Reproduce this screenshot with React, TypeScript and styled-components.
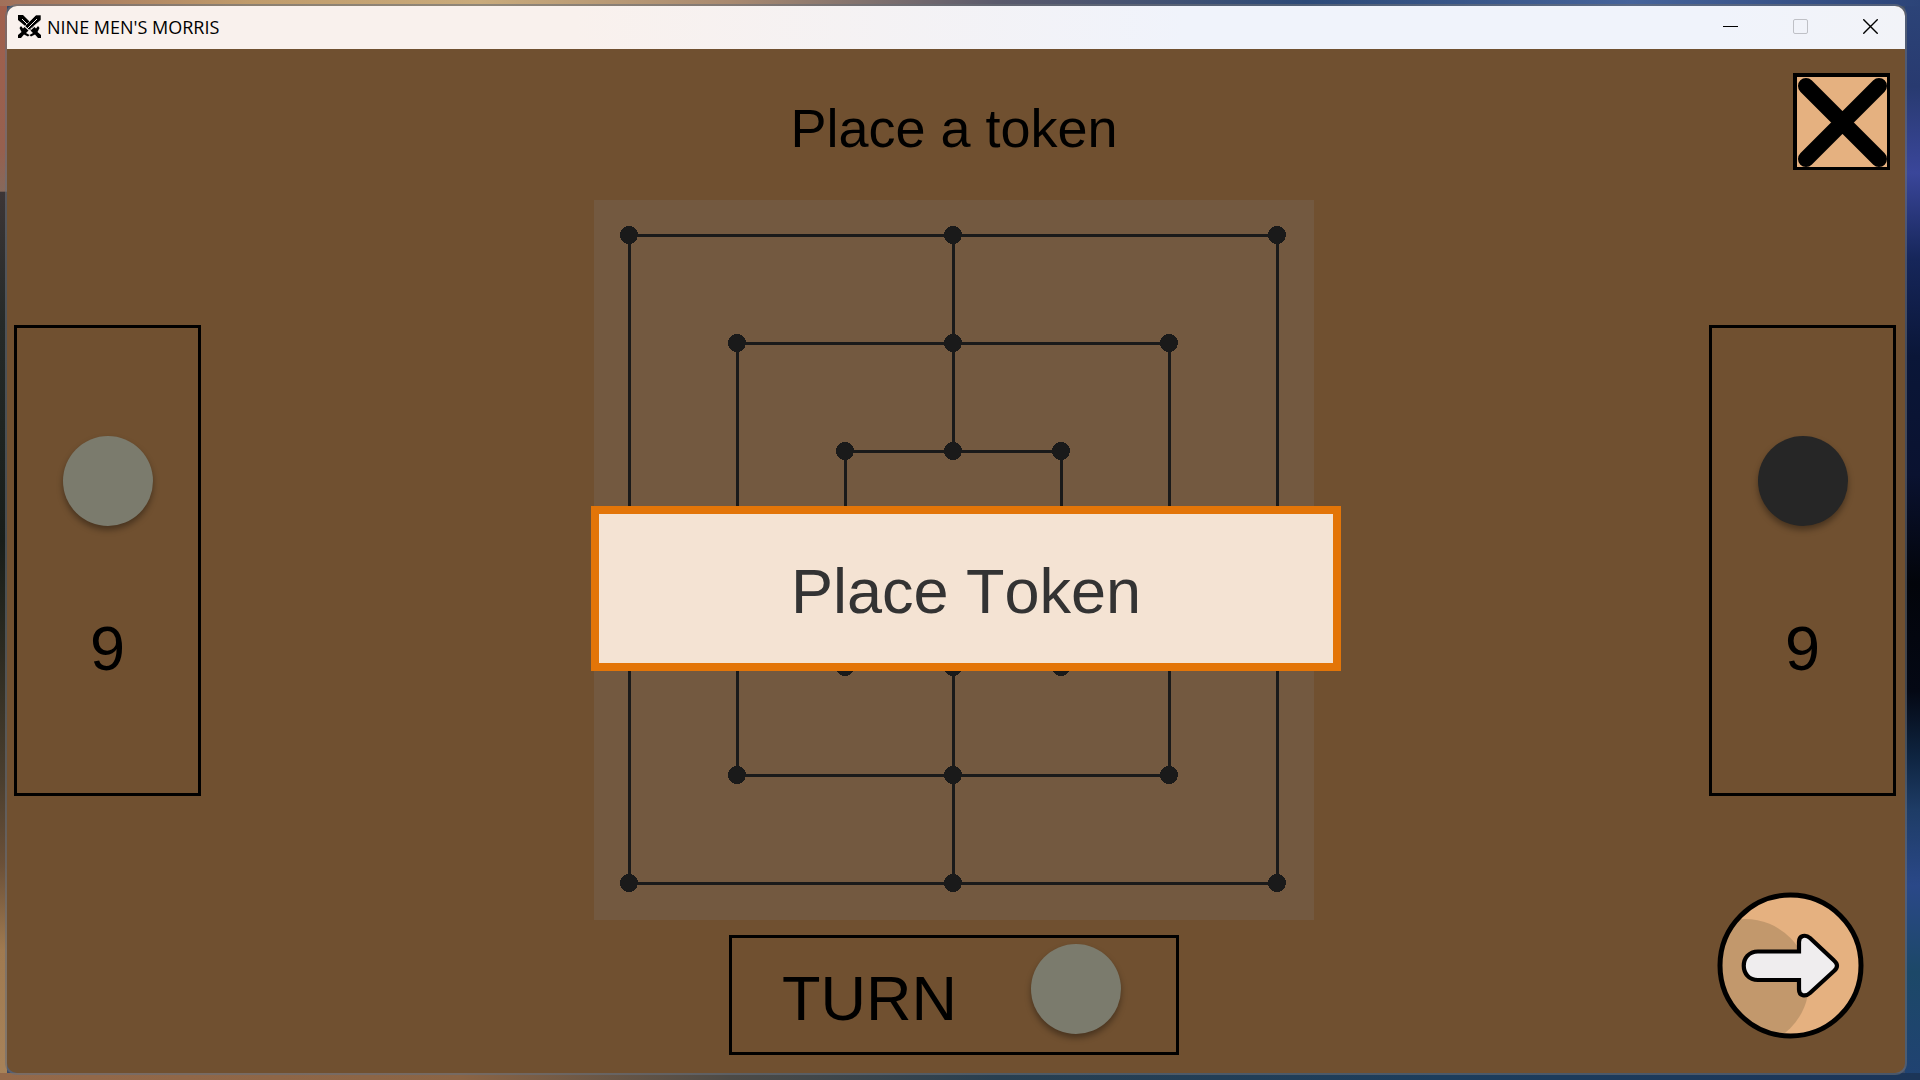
import React from "react";
import styled, { createGlobalStyle } from "styled-components";

const GlobalStyle = createGlobalStyle`
  * { box-sizing: border-box; }
  body {
    margin: 0;
    font-family: "Liberation Sans", Arial, sans-serif;
    color: #000;
  }
`;

const Desktop = styled.div`
  display: flex;
  min-height: 100vh;
  padding: 6px 15px 7px 7px;
  background:
    linear-gradient(90deg, #a1705a 0%, #c09c6c 13%, #c9ab7c 25%, #a98a70 38%, #5a5a6c 52%, #2d4a78 68%, #46639a 85%, #2c4478 100%) top / 100% 6px no-repeat,
    linear-gradient(90deg, #94694a 0%, #8a6445 24%, #4c4a46 38%, #283f50 52%, #1c3d5c 75%, #1c3558 100%) bottom / 100% 7px no-repeat,
    linear-gradient(180deg, #a1604d 0%, #96604f 14%, #86695c 17.7%, #3c3536 17.8%, #252a28 30%, #181d19 50%, #2c2a20 60%, #4a3e2e 72%, #6b5038 80%, #a07a50 88%, #a8835a 100%) left / 7px 100% no-repeat,
    linear-gradient(180deg, #2c4478 0%, #283a70 8%, #3a469a 16%, #16265a 24%, #0a1638 33%, #0a1230 44%, #02040a 54%, #040814 64%, #0e2440 70%, #1e3c66 75%, #2a4888 82%, #1c4868 90%, #204272 100%) right / 15px 100% no-repeat,
    #3a4a66;
`;

const AppWindow = styled.div`
  flex: 1;
  display: flex;
  flex-direction: column;
  border-radius: 10px;
  overflow: hidden;
  background: #705030;
  box-shadow: 0 0 0 2px rgba(105, 110, 118, 0.6);
`;

const TitleBar = styled.header`
  display: flex;
  align-items: center;
  height: 43px;
  padding: 0 0 2px 11px;
  gap: 5px;
  background: linear-gradient(90deg, #f9f1ed 0%, #f9f1ed 30%, #f0f3fb 62%, #f0f3fb 90%, #f2f3f8 100%);
`;

const WindowTitle = styled.span`
  flex: 1;
  font: 18px/24px "Open Sans", "Noto Sans", sans-serif;
`;

const WindowButton = styled.button`
  display: grid;
  place-items: center;
  width: 70px;
  height: 41px;
  padding: 0;
  border: 0;
  background: none;
  color: #000;
  &:disabled { color: #bfc0c6; }
`;

const Controls = styled.div`
  display: flex;
`;

const Stage = styled.main`
  flex: 1;
  display: grid;
  grid-template-columns: 187px 1fr 187px;
  padding: 0 9px 0 7px;
`;

const Side = styled.aside`
  display: grid;
  grid-template-rows: 1fr auto 1fr;
  padding-bottom: 2px;
`;

const PlayerPanel = styled.section`
  grid-row: 2;
  display: flex;
  flex-direction: column;
  align-items: center;
  gap: 90px;
  padding: 108px 0 113px;
  border: 3px solid #000;
`;

const Token = styled.span<{ $dark?: boolean }>`
  width: 90px;
  height: 90px;
  border-radius: 50%;
  background: ${(p) => (p.$dark ? "#262626" : "#7b7b6d")};
  box-shadow: 0 4px 6px rgba(0, 0, 0, 0.36);
`;

const BigText = styled.span`
  font-size: 63px;
  line-height: 64px;
  font-kerning: none;
`;

const CloseButton = styled.button`
  grid-row: 1;
  justify-self: end;
  align-self: start;
  width: 97px;
  height: 97px;
  margin: 24px 6px 0 0;
  padding: 0;
  border: 0;
  background: #e5b180;
`;

const NextButton = styled.button`
  grid-row: 3;
  justify-self: end;
  align-self: end;
  width: 147px;
  height: 147px;
  margin: 0 32px 32px 0;
  padding: 0;
  border: 0;
  border-radius: 50%;
  background: none;
`;

const Drawing = styled.svg`
  display: block;
`;

const Play = styled.div`
  display: flex;
  flex-direction: column;
  align-items: center;
  padding-right: 2px;
`;

const Instruction = styled.h1`
  margin: 47px 0 40px;
  font-size: 54px;
  font-weight: 400;
  line-height: 64px;
`;

const BoardArea = styled.div`
  position: relative;
  width: 720px;
  background: #735940;
`;

const Notice = styled.div`
  position: absolute;
  top: 306px;
  left: -3px;
  display: flex;
  align-items: center;
  justify-content: center;
  width: 750px;
  height: 165px;
  padding-top: 5px;
  border: 8px solid #e37508;
  background: #f4e3d3;
  color: #333;
`;

const TurnBox = styled.section`
  display: flex;
  justify-content: space-between;
  align-items: flex-start;
  width: 450px;
  height: 120px;
  margin: 15px 0 18px;
  padding: 6px 55px 0 50px;
  border: 3px solid #000;
`;

const TurnLabel = styled(BigText)`
  align-self: center;
`;

const CENTER = 3;
const at = (n: number) => 35 + n * 108;

function Board() {
  const points = [0, 1, 2].flatMap((ring) => {
    const stops = [ring, CENTER, 6 - ring];
    return stops.flatMap((x) => stops.map((y) => [x, y])).filter(([x, y]) => x !== CENTER || y !== CENTER);
  });
  return (
    <Drawing width="720" height="720" viewBox="0 0 720 720" shapeRendering="crispEdges" role="img" aria-label="Board">
      <g transform="translate(.5 .5)" fill="none" stroke="#1a1a1a" strokeWidth="3">
        {[0, 1, 2].map((ring) => (
          <rect key={ring} x={at(ring)} y={at(ring)} width={(6 - 2 * ring) * 108} height={(6 - 2 * ring) * 108} />
        ))}
        <path d={`M${at(3)} ${at(0)}V${at(2)}M${at(3)} ${at(4)}V${at(6)}M${at(0)} ${at(3)}H${at(2)}M${at(4)} ${at(3)}H${at(6)}`} />
      </g>
      {points.map(([x, y]) => (
        <circle key={`${x}-${y}`} cx={at(x)} cy={at(y)} r="9" fill="#1a1a1a" />
      ))}
    </Drawing>
  );
}

const BLADE = "M0 0H5L16 11L12 15L0 5Z";
const HILT = "M20 11L21.500 13L19.500 17L23 20V23H20L17 19.500L13 21.500L11.500 20L15 18L12.500 15.500L16.500 12L18 13.500Z";

function SwordsIcon() {
  return (
    <Drawing width="24" height="24" viewBox="0 0 24 24" aria-hidden="true">
      <path d={BLADE} />
      <path d="M4 4L14 14" stroke="#f9f1ed" />
      <path d={HILT} />
      <g transform="matrix(-1 0 0 1 23 0)">
        <path d={BLADE} stroke="#f9f1ed" strokeWidth=".6" />
        <path d="M4 4L14 14" stroke="#f9f1ed" />
        <path d={HILT} />
      </g>
    </Drawing>
  );
}

function Player({ dark, left, name }: { dark?: boolean; left: number; name: string }) {
  return (
    <PlayerPanel aria-label={name}>
      <Token $dark={dark} />
      <BigText>{left}</BigText>
    </PlayerPanel>
  );
}

export default function App() {
  return (
    <>
      <GlobalStyle />
      <Desktop>
        <AppWindow>
          <TitleBar>
            <SwordsIcon />
            <WindowTitle>NINE MEN'S MORRIS</WindowTitle>
            <Controls>
              <WindowButton aria-label="Minimize">
                <Drawing width="15" height="15" viewBox="0 0 15 15"><path d="M0 7.500H15" stroke="currentColor" /></Drawing>
              </WindowButton>
              <WindowButton aria-label="Maximize" disabled>
                <Drawing width="15" height="15" viewBox="0 0 15 15"><rect x=".5" y=".5" width="14" height="14" rx="1.500" fill="none" stroke="currentColor" /></Drawing>
              </WindowButton>
              <WindowButton aria-label="Close window">
                <Drawing width="15" height="15" viewBox="0 0 15 15"><path d="M.3 .3L14.700 14.700M14.700 .3L.3 14.700" stroke="currentColor" strokeWidth="1.400" /></Drawing>
              </WindowButton>
            </Controls>
          </TitleBar>
          <Stage>
            <Side>
              <Player name="Light player" left={9} />
            </Side>
            <Play>
              <Instruction>Place a token</Instruction>
              <BoardArea>
                <Board />
                <Notice role="alert">
                  <BigText>Place Token</BigText>
                </Notice>
              </BoardArea>
              <TurnBox>
                <TurnLabel>TURN</TurnLabel>
                <Token />
              </TurnBox>
            </Play>
            <Side>
              <CloseButton aria-label="Quit game">
                <Drawing width="97" height="97" viewBox="0 0 97 97">
                  <path d="M0 0H97V97H0ZM4 4V94H94V4Z" fillRule="evenodd" />
                  <path d="M13 13L86 86M86 13L13 86" stroke="#000" strokeWidth="16" strokeLinecap="round" />
                </Drawing>
              </CloseButton>
              <Player name="Dark player" left={9} dark />
              <NextButton aria-label="Next">
                <Drawing width="147" height="147" viewBox="0 0 147 147">
                  <defs>
                    <clipPath id="disc"><circle cx="73.500" cy="73.500" r="71" /></clipPath>
                  </defs>
                  <circle cx="73.500" cy="73.500" r="71" fill="#e5b180" />
                  <circle cx="28" cy="91" r="64" fill="#c2986c" clipPath="url(#disc)" />
                  <circle cx="73.500" cy="73.500" r="70.500" fill="none" stroke="#000" strokeWidth="5" />
                  <path
                    d="M41 59.500H82V50C82 43.500 88.500 42 93 46L117 68.500Q123 73.700 117 79L93 101C88.500 105 82 104 82 97.500V88H41C22 88 22 59.500 41 59.500Z"
                    fill="#efedee"
                    stroke="#000"
                    strokeWidth="4.200"
                  />
                </Drawing>
              </NextButton>
            </Side>
          </Stage>
        </AppWindow>
      </Desktop>
    </>
  );
}
